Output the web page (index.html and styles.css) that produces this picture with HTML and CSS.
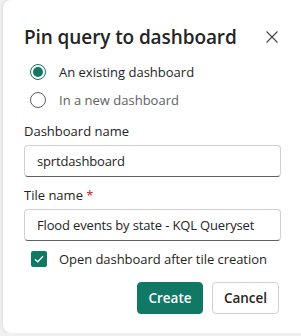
FILE: index.html
```html
<!DOCTYPE html>
<html lang="en">
<head>
    <meta charset="UTF-8">
    <meta name="viewport" content="width=device-width, initial-scale=1.0">
    <title>Pin query to dashboard</title>
    <link rel="stylesheet" href="styles.css">
</head>
<body>
    <div class="dialog">
        <div class="dialog-header">
            <h1>Pin query to dashboard</h1>
            <button class="close" aria-label="Close">
                <svg width="12" height="12" viewBox="0 0 12 12">
                    <path d="M0.5 0.5 L11.5 11.5 M11.5 0.5 L0.5 11.5" stroke="#424242" stroke-width="1.1" fill="none"/>
                </svg>
            </button>
        </div>

        <div class="radio-group">
            <label class="radio checked">
                <span class="radio-dot"></span>
                An existing dashboard
            </label>
            <label class="radio">
                <span class="radio-dot"></span>
                In a new dashboard
            </label>
        </div>

        <div class="field">
            <label>Dashboard name</label>
            <div class="input">sprtdashboard</div>
        </div>

        <div class="field">
            <label>Tile name <span class="required">*</span></label>
            <div class="input">Flood events by state - KQL Queryset</div>
        </div>

        <label class="checkbox">
            <span class="box">
                <svg width="10" height="8" viewBox="0 0 10 8">
                    <path d="M1 4.2 L3.7 6.8 L9 1.2" stroke="#fff" stroke-width="1.3" fill="none"/>
                </svg>
            </span>
            Open dashboard after tile creation
        </label>

        <div class="actions">
            <button class="btn primary">Create</button>
            <button class="btn">Cancel</button>
        </div>
    </div>
</body>
</html>
```

FILE: styles.css
```css
body {
    margin: 0;
    background-color: #f0f0f0;
    font-family: "Segoe UI", "Open Sans", sans-serif;
    color: #242424;
    overflow: hidden;
}

.dialog {
    margin-left: 3px;
    width: 310px;
    height: 333px;
    box-sizing: border-box;
    padding: 23px 0 0 21px;
    background-color: #fff;
    border-radius: 8px;
    box-shadow: 0 0 3px rgba(0, 0, 0, 0.15);
}

.dialog-header {
    display: flex;
    align-items: center;
    width: 254px;
    justify-content: space-between;
    height: 28px;
}

h1 {
    margin: 0;
    font-size: 19px;
    font-weight: 600;
    letter-spacing: -0.1px;
}

.close {
    border: none;
    background: none;
    padding: 0;
    width: 12px;
    height: 12px;
    display: flex;
}

.radio-group {
    margin-top: 7px;
    padding-left: 6px;
}

.radio {
    display: flex;
    align-items: center;
    height: 28px;
    font-size: 13px;
    color: #242424;
}

.radio + .radio {
    color: #616161;
}

.radio-dot {
    width: 16px;
    height: 16px;
    box-sizing: border-box;
    border: 1px solid #616161;
    border-radius: 50%;
    margin-right: 13px;
    display: flex;
    align-items: center;
    justify-content: center;
}

.radio.checked .radio-dot {
    border-color: #117865;
}

.radio.checked .radio-dot::after {
    content: "";
    width: 10px;
    height: 10px;
    border-radius: 50%;
    background-color: #117865;
}

.field {
    width: 257px;
}

.field label {
    display: block;
    font-size: 13px;
    line-height: 20px;
}

.radio-group + .field {
    margin-top: 7px;
}

.field + .field {
    margin-top: 8px;
}

.required {
    color: #c50f1f;
}

.input {
    margin-top: 4px;
    height: 32px;
    box-sizing: border-box;
    border: 1px solid #d1d1d1;
    border-bottom-color: #616161;
    border-radius: 4px;
    padding: 0 12px;
    font-size: 13px;
    letter-spacing: -0.15px;
    line-height: 30px;
    white-space: nowrap;
    overflow: hidden;
}

.checkbox {
    display: flex;
    align-items: center;
    margin-top: 8px;
    padding-left: 7px;
    height: 20px;
    font-size: 13px;
    letter-spacing: -0.05px;
}

.box {
    width: 16px;
    height: 16px;
    background-color: #117865;
    border-radius: 2px;
    margin-right: 12px;
    display: flex;
    align-items: center;
    justify-content: center;
}

.actions {
    display: flex;
    gap: 9px;
    margin-top: 13px;
    margin-left: 113px;
}

.btn {
    height: 32px;
    width: 67px;
    box-sizing: border-box;
    border: 1px solid #d1d1d1;
    border-radius: 4px;
    background-color: #fff;
    font-family: inherit;
    font-size: 13.5px;
    font-weight: 600;
    color: #242424;
    padding: 0;
}

.btn.primary {
    width: 66px;
    background-color: #117865;
    border-color: #117865;
    color: #fff;
}
```
